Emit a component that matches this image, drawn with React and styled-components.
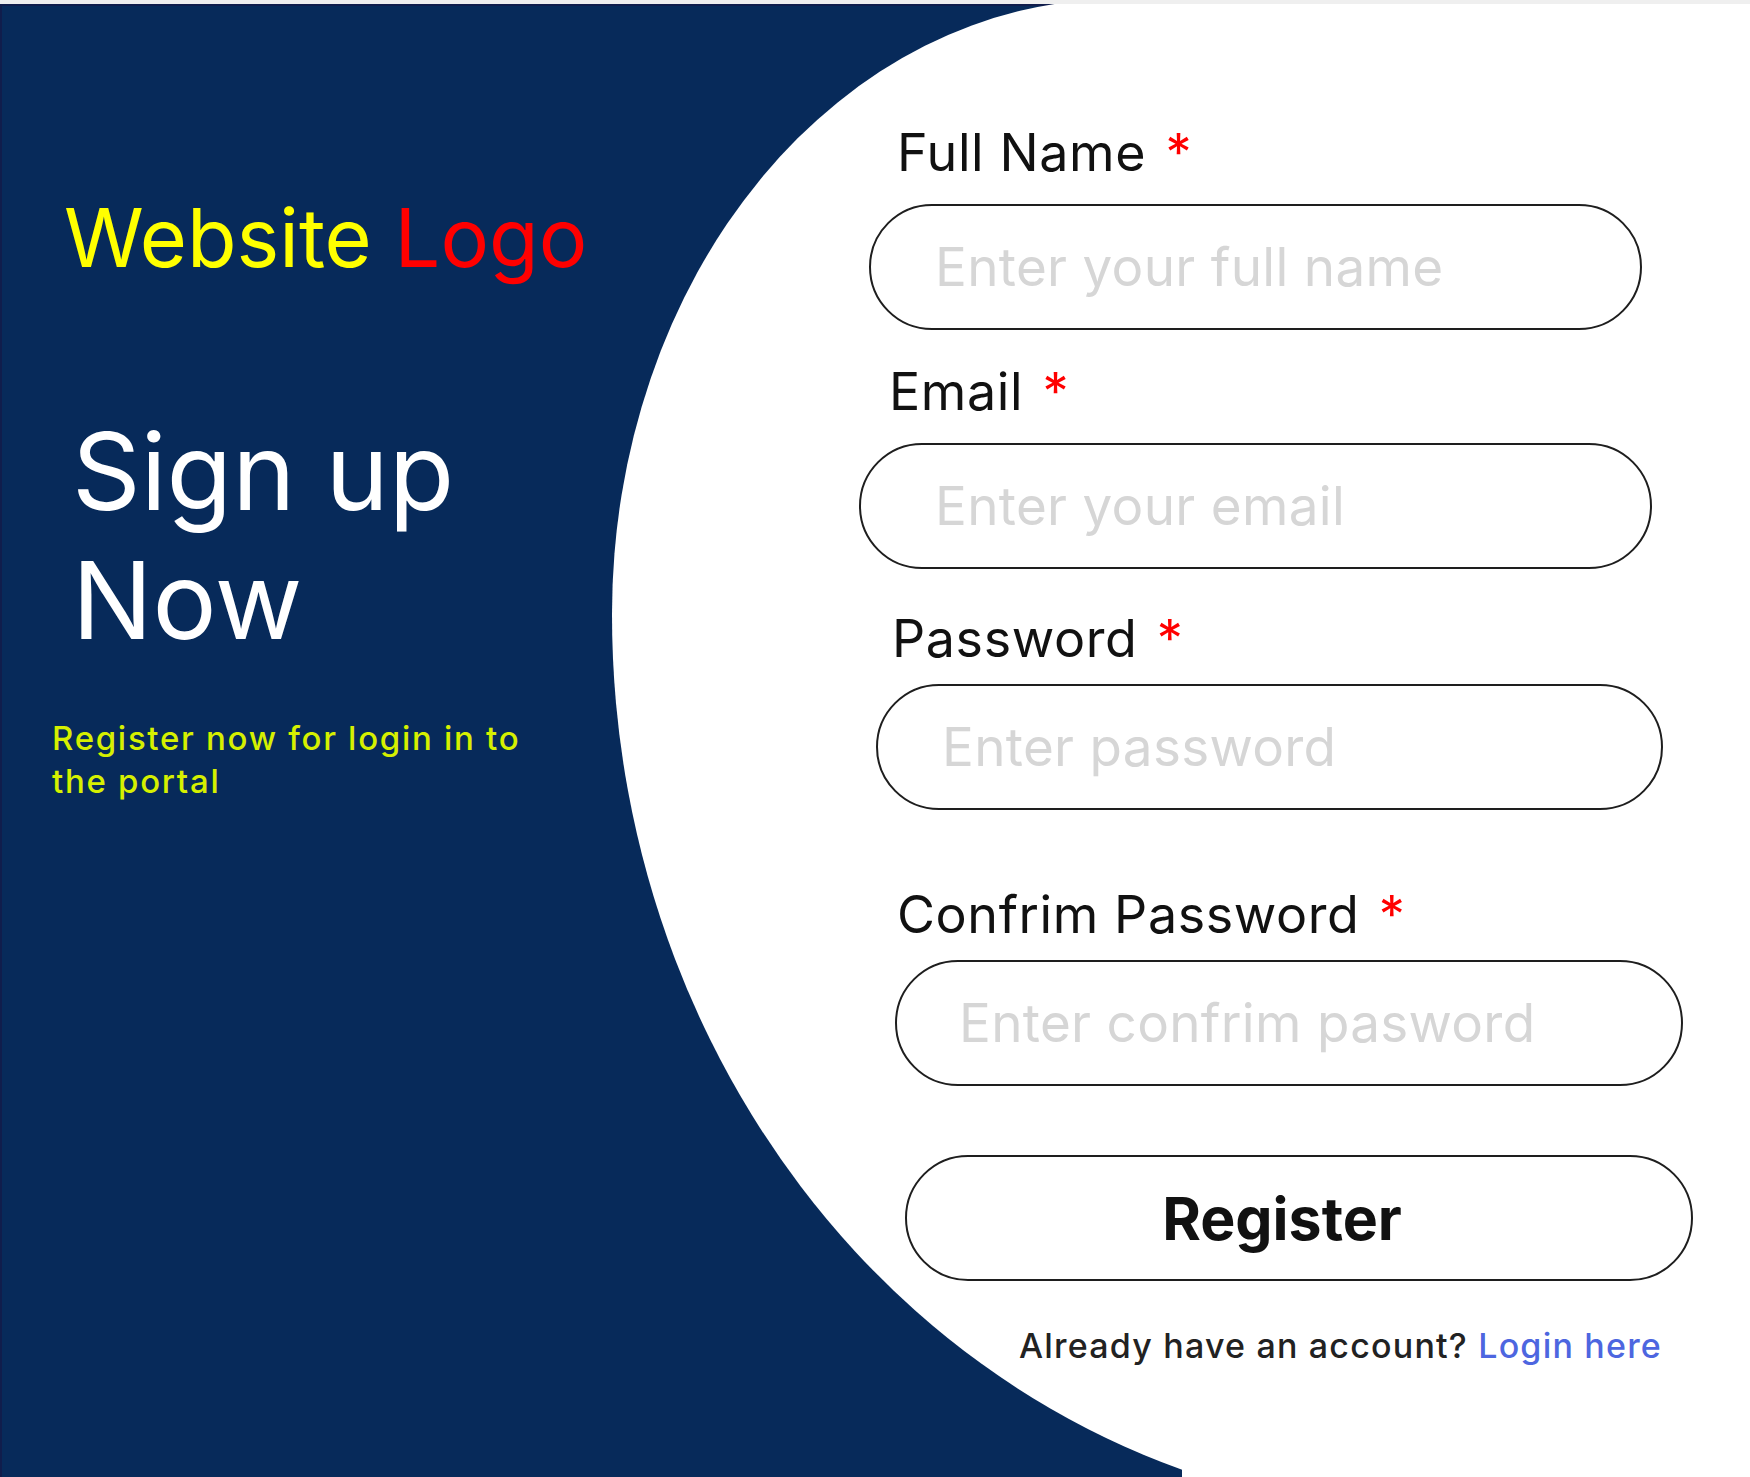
import styled, { createGlobalStyle } from "styled-components";

const GlobalStyle = createGlobalStyle`
  html, body {
    margin: 0;
    padding: 0;
    background: #fff;
  }
  body {
    font-family: Inter, "Noto Sans", "Liberation Sans", sans-serif;
  }
  * {
    box-sizing: border-box;
  }
`;

const navy = "#072a5a";

const Page = styled.div`
  display: grid;
  grid-template-columns: 612px 1fr;
  align-items: start;
  height: 1477px;
  overflow: hidden;
  border-top: 4px solid #efefef;
  background:
    linear-gradient(#101d4c, #101d4c) left top / 1182px 2px no-repeat,
    linear-gradient(#101d4c, #101d4c) left top / 2px 100% no-repeat,
    linear-gradient(${navy}, ${navy}) left top / 1182px 100% no-repeat,
    #fff;
`;

const Hero = styled.div`
  display: flex;
  flex-direction: column;
  align-items: flex-start;
  padding: 186px 0 0 64px;
`;

const Logo = styled.div`
  font-size: 81px;
  line-height: 97px;
  color: #ffff00;
  white-space: nowrap;

  span {
    color: #ff0000;
  }
`;

const Heading = styled.h1`
  margin: 120px 0 0 8px;
  font-size: 107px;
  line-height: 129px;
  font-weight: 400;
  color: #fff;
`;

const Tagline = styled.p`
  margin: 52px 0 0 -12px;
  width: 490px;
  font-size: 33px;
  line-height: 43px;
  font-weight: 500;
  letter-spacing: 1.7px;
  color: #d6f000;
`;

const FormPanel = styled.form`
  margin-top: -5px;
  height: 1516px;
  background: #fff;
  border-top-left-radius: 507px 615px;
  border-bottom-left-radius: 830px 900px;
  padding: 123px 0 0 247px;
  display: flex;
  flex-direction: column;
  align-items: flex-start;
`;

const Field = styled.div`
  display: flex;
  flex-direction: column;
  align-items: flex-start;
  margin-top: ${(p) => p.$top || 0}px;
  margin-left: ${(p) => p.$shift || 0}px;
`;

const Label = styled.label`
  font-size: 52px;
  line-height: 62px;
  letter-spacing: 0.6px;
  color: #111;
  margin-left: ${(p) => p.$indent || 0}px;
  margin-bottom: ${(p) => p.$gap || 20}px;
  white-space: nowrap;

  span {
    color: #ff0000;
    margin-left: 4px;
  }
`;

const Input = styled.input`
  width: ${(p) => p.$width}px;
  height: 126px;
  border: 2px solid #1e1e1e;
  border-radius: 63px;
  padding: 0 0 0 ${(p) => p.$pad || 64}px;
  font-family: inherit;
  font-size: 53px;
  letter-spacing: 0.3px;
  color: #222;
  background: #fff;
  outline: none;

  &::placeholder {
    color: #d6d6d6;
  }
`;

const Button = styled.button`
  margin: 69px 0 0 46px;
  width: 788px;
  height: 126px;
  border: 2px solid #1e1e1e;
  border-radius: 63px;
  background: #fff;
  padding: 0 34px 0 0;
  font-family: inherit;
  font-size: 59px;
  font-weight: 700;
  color: #111;
  cursor: pointer;
`;

const Footer = styled.p`
  margin: 44px 0 0 160px;
  font-size: 34px;
  line-height: 41px;
  font-weight: 500;
  letter-spacing: 1.2px;
  color: #222;
  white-space: nowrap;

  a {
    color: #4d66e0;
    text-decoration: none;
  }
`;

const fields = [
  { label: "Full Name", placeholder: "Enter your full name", type: "text", top: 0, shift: 10, indent: 28, gap: 20, width: 773, pad: 64 },
  { label: "Email", placeholder: "Enter your email", type: "email", top: 31, shift: 0, indent: 30, gap: 20, width: 793, pad: 74 },
  { label: "Password", placeholder: "Enter password", type: "password", top: 39, shift: 17, indent: 16, gap: 14, width: 787, pad: 64 },
  { label: "Confrim Password", placeholder: "Enter confrim pasword", type: "password", top: 74, shift: 36, indent: 2, gap: 14, width: 788, pad: 62 },
];

const App = () => {
  return (
    <>
      <GlobalStyle />
      <Page>
        <Hero>
          <Logo>
            Website <span>Logo</span>
          </Logo>
          <Heading>
            Sign up
            <br />
            Now
          </Heading>
          <Tagline>Register now for login in to the portal</Tagline>
        </Hero>
        <FormPanel onSubmit={(e) => e.preventDefault()}>
          {fields.map((f) => (
            <Field key={f.label} $top={f.top} $shift={f.shift}>
              <Label $indent={f.indent} $gap={f.gap}>
                {f.label} <span>*</span>
              </Label>
              <Input type={f.type} placeholder={f.placeholder} $width={f.width} $pad={f.pad} />
            </Field>
          ))}
          <Button type="submit">Register</Button>
          <Footer>
            Already have an account? <a href="#">Login here</a>
          </Footer>
        </FormPanel>
      </Page>
    </>
  );
};

export default App;
